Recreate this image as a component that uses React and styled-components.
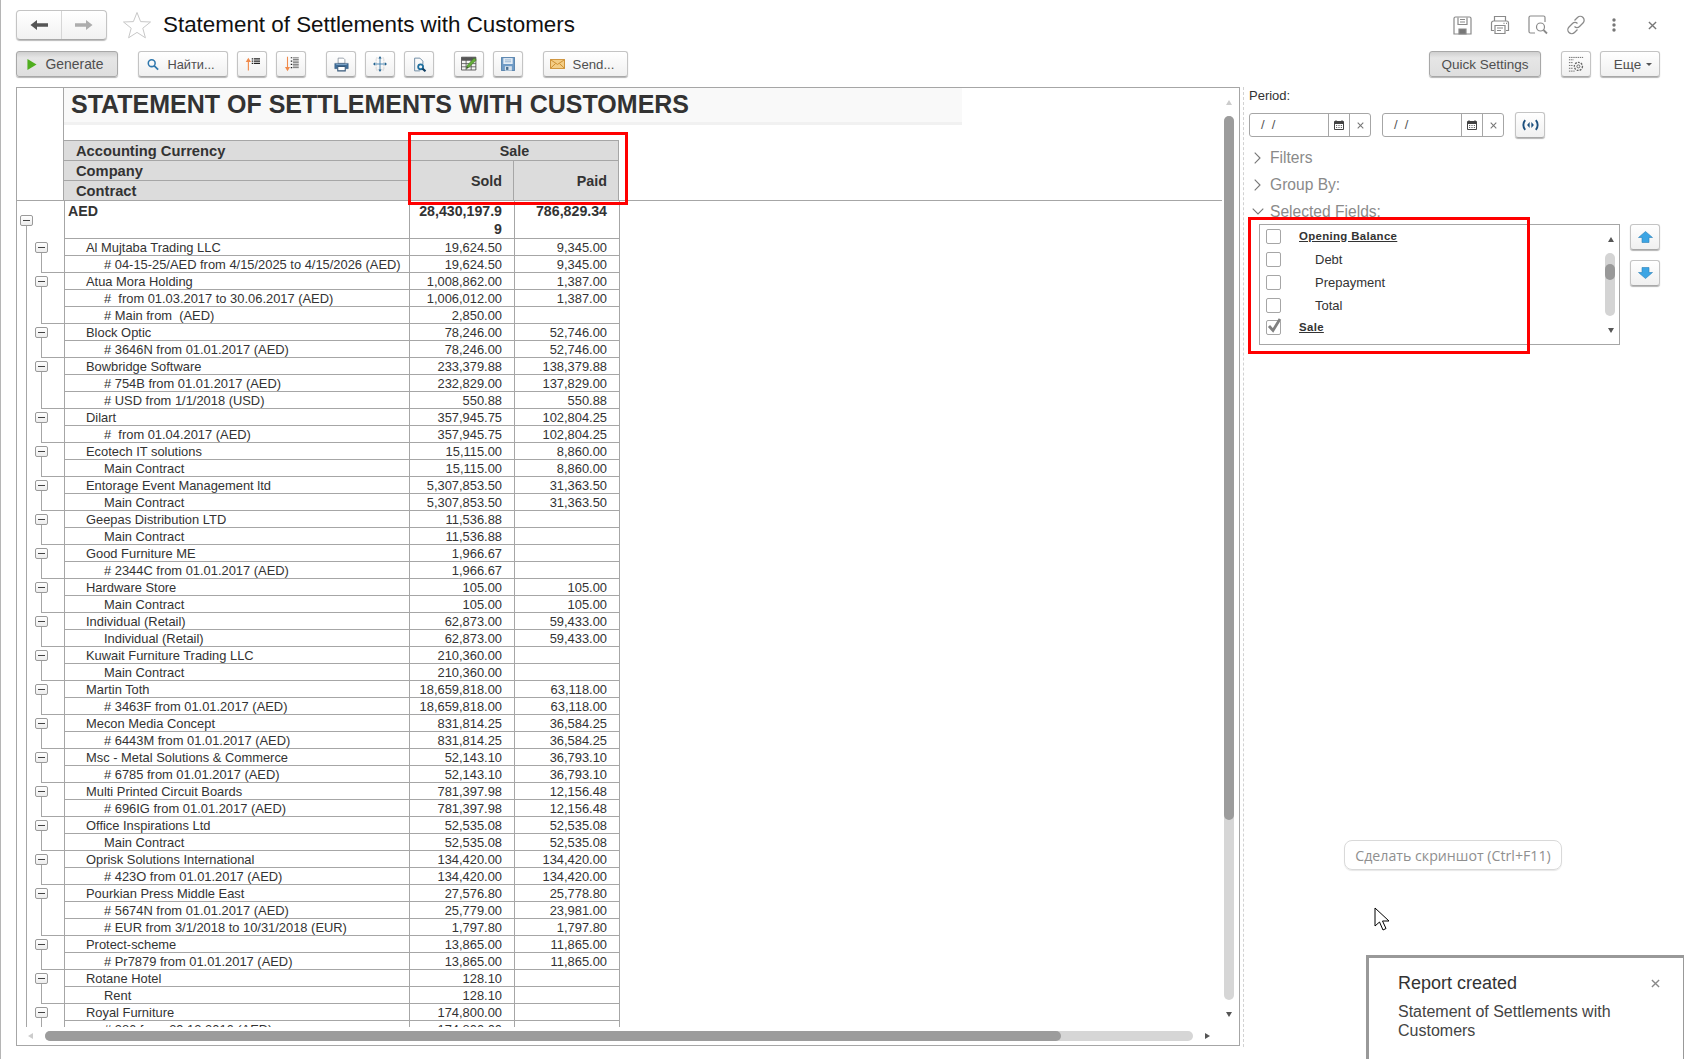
import React from "react";
import styled, { createGlobalStyle } from "styled-components";

const GlobalStyle = createGlobalStyle`
  html, body {
    margin: 0;
    background: #fff;
    font-family: "Liberation Sans", Arial, sans-serif;
    color: #333;
  }
  * {
    box-sizing: border-box;
  }
`;

const Page = styled.div`
  position: relative;
  width: 1684px;
  height: 1059px;
  overflow: hidden;
  border-left: 1px solid #b5b5b5;
  padding: 10px 0 0 15px;
`;

const Header = styled.header`
  display: flex;
  align-items: center;
  height: 30px;
`;
const NavGroup = styled.div`
  display: flex;
  width: 91px;
  height: 30px;
  border: 1px solid #c4c4c4;
  border-bottom-color: #a8a8a8;
  border-radius: 4px;
  background: linear-gradient(#fff, #f1f1f1);
  box-shadow: 0 1px 1px #bbb;
`;
const NavButton = styled.div`
  flex: 1;
  display: flex;
  align-items: center;
  justify-content: center;
  & + & {
    border-left: 1px solid #d6d6d6;
  }
`;
const StarWrap = styled.div`
  display: flex;
  margin-left: 15px;
`;
const Title = styled.h1`
  margin: 0 0 0 11px;
  font-size: 22.4px;
  font-weight: 400;
  color: #111;
  white-space: nowrap;
`;
const WindowIcons = styled.div`
  display: flex;
  align-items: center;
  margin-left: auto;
  margin-right: 20px;
  gap: 14px;
`;
const WindowIcon = styled.div`
  display: flex;
  align-items: center;
  justify-content: center;
  width: 24px;
  height: 24px;
`;

const Toolbar = styled.div`
  display: flex;
  align-items: center;
  height: 26px;
  margin-top: 11px;
`;
const Button = styled.div`
  display: flex;
  align-items: center;
  justify-content: center;
  flex: none;
  height: 26px;
  width: ${(p) => p.$width || 30}px;
  margin-left: ${(p) => p.$gap ?? 9}px;
  padding-right: ${(p) => p.$shift || 0}px;
  border: 1px solid ${(p) => (p.$pressed ? "#a8a8a8" : "#c4c4c4")};
  border-bottom-color: #a8a8a8;
  border-radius: 3px;
  background: ${(p) =>
    p.$pressed
      ? "linear-gradient(#cfcfcf, #e6e6e6 25%, #dedede)"
      : "linear-gradient(#fff, #f0f0f0)"};
  box-shadow: 0 1px 1px #b5b5b5;
  font-size: 13.5px;
  color: #4f4f4f;
  white-space: nowrap;
`;
const ButtonText = styled.span`
  margin-left: ${(p) => p.$gap || 0}px;
  font-size: ${(p) => p.$size || 13.5}px;
`;
const ToolbarRight = styled.div`
  display: flex;
  margin-left: auto;
  margin-right: 24px;
`;
const Caret = styled.span`
  width: 0;
  height: 0;
  margin-left: 5px;
  border-left: 3px solid transparent;
  border-right: 3px solid transparent;
  border-top: 3px solid #555;
`;

const Content = styled.div`
  display: flex;
  margin-top: 10px;
`;
const Report = styled.section`
  position: relative;
  display: flex;
  flex-direction: column;
  flex: none;
  width: 1224px;
  height: 959px;
  border: 1px solid #a6a6a6;
  padding-bottom: 18px;
`;
const ReportBody = styled.div`
  flex: 1;
  overflow: hidden;
`;
const FrozenHead = styled.div`
  display: flex;
  width: 1205px;
  border-bottom: 1px solid #a6a6a6;
`;
const HeadGutter = styled.div`
  flex: none;
  width: 47px;
  border-right: 1px solid #a6a6a6;
`;
const HeadMain = styled.div`
  flex: 1;
`;
const TitleBand = styled.div`
  width: 898px;
  height: 37px;
  margin-bottom: 15px;
  padding-left: 7px;
  background: #f9f9f9;
  border-bottom: 3px solid #f1f1f1;
  font-size: 25px;
  line-height: 32px;
  font-weight: 700;
  color: #333;
  white-space: nowrap;
`;
const HeadGrid = styled.div`
  display: grid;
  grid-template-columns: 344px 105px 106px;
  grid-template-rows: repeat(3, 20px);
  width: 555px;
`;
const HeadCell = styled.div`
  display: flex;
  align-items: center;
  justify-content: ${(p) =>
    p.$align === "end" ? "flex-end" : p.$align === "center" ? "center" : "flex-start"};
  grid-column: ${(p) => p.$col || "auto"};
  grid-row: ${(p) => p.$row || "auto"};
  padding: ${(p) =>
    p.$align === "end" ? "0 11px 0 0" : p.$align === "center" ? "0 0 0 2px" : "0 0 0 12px"};
  background: #dcdcdc;
  border-top: 1px solid #a6a6a6;
  border-left: ${(p) => (p.$side ? "1px solid #a6a6a6" : "0")};
  border-right: ${(p) => (p.$last ? "1px solid #a6a6a6" : "0")};
  font-size: ${(p) => (p.$align ? "14.3px" : "14.7px")};
  font-weight: 700;
  color: #333;
  white-space: nowrap;
`;

const Row = styled.div`
  display: grid;
  grid-template-columns: 47px 345px 105px 106px;
  width: 603px;
  height: ${(p) => (p.$total ? 38 : 17)}px;
`;
const lineColor = "#a6a6a6";
const Gutter = styled.div`
  display: flex;
  align-items: flex-start;
  background-repeat: no-repeat;
  background-image:
    linear-gradient(${lineColor}, ${lineColor}),
    linear-gradient(${lineColor}, ${lineColor}),
    linear-gradient(${lineColor}, ${lineColor});
  background-size:
    1px ${(p) => (p.$total ? "24px" : "100%")},
    1px ${(p) => (p.$kind === "company" ? "11px" : p.$kind === "child" ? "100%" : "0")},
    ${(p) => (p.$closing ? "23px 1px" : "0 0")};
  background-position:
    9px ${(p) => (p.$total ? "14px" : "0")},
    24px ${(p) => (p.$kind === "company" ? "6px" : "0")},
    24px 100%;
`;
const TreeBox = styled.div`
  display: flex;
  align-items: center;
  justify-content: center;
  width: 13px;
  height: 11px;
  margin: ${(p) => (p.$total ? "14px 0 0 3px" : "3px 0 0 18px")};
  border: 1px solid #9a9a9a;
  border-radius: 2px;
  background: linear-gradient(#fff, #ececec);
  &::before {
    content: "";
    width: 7px;
    height: 1px;
    background: #444;
  }
`;
const Cell = styled.div`
  overflow: hidden;
  padding: ${(p) => (p.$total ? "1px 12px 0 3px" : "0 12px 0 0")};
  padding-left: ${(p) => (p.$level ? `${p.$level}px` : undefined)};
  border-left: 1px solid ${lineColor};
  border-bottom: 1px solid ${lineColor};
  border-right: ${(p) => (p.$last ? `1px solid ${lineColor}` : "0")};
  text-align: ${(p) => (p.$num ? "right" : "left")};
  font-size: ${(p) => (p.$total ? "14.2px" : "12.9px")};
  font-weight: ${(p) => (p.$total ? 700 : 400)};
  line-height: 18px;
  color: #333;
  white-space: ${(p) => (p.$total ? "normal" : "pre")};
  word-break: ${(p) => (p.$total ? "break-all" : "normal")};
`;

const ScrollTrack = styled.div`
  position: absolute;
  background: #d6d6d6;
  border-radius: 5px;
  ${(p) =>
    p.$vertical
      ? "left: 1207px; top: 28px; width: 10px; height: 884px;"
      : "left: 28px; top: 943px; width: 1148px; height: 10px;"}
`;
const ScrollThumb = styled.div`
  background: #9c9c9c;
  border-radius: 5px;
  ${(p) => (p.$vertical ? "width: 10px; height: 704px;" : "width: 1016px; height: 10px;")}
`;
const ScrollArrow = styled.div`
  position: absolute;
  left: ${(p) => p.$x}px;
  top: ${(p) => p.$y}px;
  width: 0;
  height: 0;
  ${(p) =>
    p.$dir === "up" || p.$dir === "down"
      ? `border-left: 3px solid transparent; border-right: 3px solid transparent;
         border-${p.$dir === "up" ? "bottom" : "top"}: 5px solid ${p.$light ? "#ccc" : "#555"};`
      : `border-top: 3px solid transparent; border-bottom: 3px solid transparent;
         border-${p.$dir === "left" ? "right" : "left"}: 5px solid ${p.$light ? "#ccc" : "#555"};`}
`;

const Side = styled.aside`
  flex: none;
  width: 441px;
  height: 960px;
  margin-left: 3px;
  padding-left: 5px;
  border-left: 1px dashed #d2d2d2;
`;
const PeriodLabel = styled.div`
  height: 25px;
  padding-top: 1px;
  font-size: 13px;
  line-height: 15px;
  color: #333;
`;
const DateRow = styled.div`
  display: flex;
  align-items: center;
  height: 26px;
`;
const DateField = styled.div`
  display: flex;
  width: 122px;
  height: 24px;
  margin-right: 11px;
  border: 1px solid #a6a6a6;
  border-radius: 3px;
`;
const DateText = styled.div`
  flex: 1;
  padding-left: 11px;
  font-size: 13px;
  line-height: 22px;
  color: #555;
  white-space: pre;
`;
const DatePart = styled.div`
  display: flex;
  align-items: center;
  justify-content: center;
  width: 21px;
  border-left: 1px solid #a6a6a6;
  color: #666;
`;
const Section = styled.div`
  display: flex;
  align-items: center;
  height: 27px;
  margin-top: ${(p) => p.$top || 0}px;
  font-size: 15.6px;
  color: #8a8a8a;
`;
const Chevron = styled.div`
  display: flex;
  justify-content: center;
  width: 15px;
  margin: 0 5px 0 1px;
`;
const FieldsRow = styled.div`
  display: flex;
  margin: -1px 0 0 10px;
`;
const FieldList = styled.div`
  position: relative;
  width: 361px;
  height: 121px;
  overflow: hidden;
  border: 1px solid #a6a6a6;
  padding: 0 0 0 6px;
`;
const FieldRow = styled.div`
  display: flex;
  align-items: center;
  height: ${(p) => (p.$short ? 21 : 23)}px;
`;
const Check = styled.div`
  display: flex;
  align-items: center;
  justify-content: center;
  flex: none;
  width: 15px;
  height: 15px;
  border: 1px solid #a6a6a6;
  border-radius: 2px;
`;
const FieldName = styled.div`
  margin-left: ${(p) => (p.$group ? 18 : 34)}px;
  margin-top: ${(p) => (p.$group ? -2 : 0)}px;
  font-size: ${(p) => (p.$group ? "11.4px" : "13px")};
  font-weight: ${(p) => (p.$group ? 700 : 400)};
  letter-spacing: ${(p) => (p.$group ? "0.35px" : "0")};
  text-decoration: ${(p) => (p.$group ? "underline" : "none")};
  color: #333;
`;
const MoveButtons = styled.div`
  display: flex;
  flex-direction: column;
  gap: 10px;
`;
const ListTrack = styled.div`
  position: absolute;
  left: 345px;
  top: 28px;
  width: 10px;
  height: 63px;
  padding-top: 11px;
  border-radius: 5px;
  background: #d4d4d4;
`;
const ListThumb = styled.div`
  width: 10px;
  height: 16px;
  border-radius: 5px;
  background: #999;
`;

const Hint = styled.div`
  position: absolute;
  left: 1343px;
  top: 840px;
  width: 218px;
  height: 30px;
  border: 1px solid #d9d9d9;
  border-radius: 8px;
  box-shadow: 0 1px 1px #e8e8e8;
  font-family: "Open Sans", sans-serif;
  font-size: 14.2px;
  line-height: 29px;
  text-align: center;
  color: #8f8f8f;
  white-space: nowrap;
`;
const CursorWrap = styled.div`
  position: absolute;
  left: 1373px;
  top: 907px;
  display: flex;
`;
const Toast = styled.div`
  position: absolute;
  left: 1365px;
  top: 955px;
  width: 320px;
  height: 110px;
  border: 3px solid #999;
  background: #fff;
  padding: 14px 30px 0 29px;
`;
const ToastTitle = styled.div`
  font-size: 18px;
  line-height: 22px;
  color: #333;
`;
const ToastText = styled.div`
  margin-top: 8px;
  font-size: 16px;
  line-height: 19px;
  color: #444;
`;
const ToastClose = styled.div`
  position: absolute;
  right: 23px;
  top: 21px;
  display: flex;
`;
const Marker = styled.div`
  position: absolute;
  left: ${(p) => p.$x}px;
  top: ${(p) => p.$y}px;
  width: ${(p) => p.$w}px;
  height: ${(p) => p.$h}px;
  border: 3px solid #f00;
  pointer-events: none;
`;

const Arrow = ({ dir, color }) => (
  <svg width="18" height="10" viewBox="0 0 18 10">
    <path
      d={dir === "left" ? "M0.5 5 7 0V3.3H18V6.7H7V10Z" : "M17.5 5 11 0V3.3H0V6.7H11V10Z"}
      fill={color}
    />
  </svg>
);
const Star = () => (
  <svg width="30" height="28" viewBox="0 0 30 28">
    <path
      d="M15 1.5 18.6 10.6 28.5 11 20.8 17.2 23.4 26.8 15 21.4 6.6 26.8 9.2 17.2 1.5 11 11.4 10.6Z"
      fill="#fff"
      stroke="#c8c8c8"
    />
  </svg>
);
const Play = () => (
  <svg width="10" height="11" viewBox="0 0 11 13" preserveAspectRatio="none">
    <path d="M0.5 0 10.5 6.5 0.5 13Z" fill="#4fae1e" />
  </svg>
);
const Search = () => (
  <svg width="12" height="13" viewBox="0 0 14 14" fill="none">
    <circle cx="5.5" cy="5.5" r="4" stroke="#2f77ad" strokeWidth="1.8" />
    <path d="M8.5 8.5 13 13" stroke="#2f77ad" strokeWidth="2" />
  </svg>
);
const SortUp = () => (
  <svg width="15" height="15" viewBox="0 0 20 20" fill="none">
    <path d="M4.5 18V3" stroke="#f08a4b" strokeWidth="1.5" />
    <path d="M1 6.5 4.5 1 8 6.5Z" fill="#f08a4b" />
    <path d="M9 2.5h2M9 5.5h2M9 8.5h2" stroke="#222" strokeWidth="1.5" />
    <path d="M12 2.5h8M12 5.5h8M12 8.5h8" stroke="#222" strokeWidth="1.5" />
  </svg>
);
const SortDown = () => (
  <svg width="15" height="16" viewBox="0 0 20 22" fill="none">
    <path d="M4.5 1v16" stroke="#f08a4b" strokeWidth="1.5" />
    <path d="M1 15 4.5 21 8 15Z" fill="#f08a4b" />
    <path d="M9 2.5h2M9 7h2M9 11.5h2M9 16h2" stroke="#222" strokeWidth="1.5" />
    <path d="M12 2.5h8M12 4.7h8M12 7h8M12 9.2h8M12 11.5h8M12 13.7h8M12 16h8" stroke="#666" strokeWidth="1.2" />
  </svg>
);
const Printer = () => (
  <svg width="15" height="15" viewBox="0 0 20 20">
    <path d="M5.5 1.5h7l2 2v5h-9Z" fill="#fff" stroke="#7d8a96" />
    <path d="M1 8.5h18v7h-3.5v-3h-11v3H1Z" fill="#3f6f9c" stroke="#36587a" strokeWidth=".6" />
    <path d="M5 12.5h10v6H5Z" fill="#fff" stroke="#36587a" strokeWidth="1.4" />
    <path d="M3 10h14" stroke="#8fb2d2" />
  </svg>
);
const FitPage = () => (
  <svg width="14" height="16" viewBox="0 0 20 20" fill="none" preserveAspectRatio="none">
    <path d="M4.5 2.5h11v15h-11Z" stroke="#b5b5b5" strokeDasharray="1 1" />
    <path d="M10 2v16M1.5 10h17" stroke="#3e7fae" strokeWidth="1.2" />
    <path d="M10 0 7.8 3h4.4ZM10 20 7.8 17h4.4ZM0 10 3 7.8v4.4ZM20 10 17 7.8v4.4Z" fill="#24628f" />
  </svg>
);
const PagePreview = () => (
  <svg width="15" height="15" viewBox="0 0 20 20" fill="none">
    <path d="M3.5 18.5V1.5h7l4 4v4" stroke="#6f8ca5" strokeWidth="1.3" />
    <path d="M3.5 18.5h7" stroke="#6f8ca5" strokeWidth="1.3" />
    <circle cx="11.5" cy="13" r="3.3" stroke="#1f6f9e" strokeWidth="2.4" />
    <path d="M14 15.5 18 19" stroke="#123f63" strokeWidth="2.8" />
  </svg>
);
const EditTable = () => (
  <svg width="17" height="16" viewBox="0 0 20 20" fill="none" preserveAspectRatio="none">
    <path d="M.5 1.5h17v16H.5Z" fill="#f4f4f4" stroke="#444" />
    <path d="M.5 5.5h17M.5 9.5h17M.5 13.5h17M6 1.5v16M12 1.5v16" stroke="#555" />
    <path d="M.5 1.5h17V5H.5Z" fill="#555" />
    <path d="M15.5 2.5 18 5 9.5 14 6.5 15.5 7.5 11.5Z" fill="#65ad3a" stroke="#3d7a24" strokeWidth=".7" />
    <path d="M6.5 15.5 7 13.5 8.5 15Z" fill="#333" />
  </svg>
);
const Floppy = () => (
  <svg width="14" height="14" viewBox="0 0 18 19" preserveAspectRatio="none">
    <path d="M.5.5h17v18H.5Z" fill="#6f9bc6" stroke="#3c6d9b" />
    <path d="M3 1.5h12v8H3Z" fill="#e6eef6" />
    <path d="M5 4h8M5 6.5h8" stroke="#7ea3c6" />
    <path d="M5 12.5h9v6H5Z" fill="#d8e2ec" />
    <path d="M6.5 13.5h3v4h-3Z" fill="#4a6e90" />
  </svg>
);
const Envelope = () => (
  <svg width="15" height="10" viewBox="0 0 15 12" fill="none" preserveAspectRatio="none">
    <path d="M.5.5h14v11H.5Z" fill="#f3cd85" stroke="#c98a2c" />
    <path d="M.5.8 7.5 6.5 14.5.8M.5 11.2 5.5 5.5M14.5 11.2 9.5 5.5" stroke="#c98a2c" />
  </svg>
);
const GearList = () => (
  <svg width="17" height="17" viewBox="0 0 18 18" fill="none" stroke="#666">
    <path d="M1 1.5h15M1 4h5M1 7h4M1 10h4M1 13h4M1 16h6" strokeDasharray="1.5 .8" />
    <circle cx="11" cy="11" r="1.6" />
    <circle cx="11" cy="11" r="4.3" strokeWidth="1.4" strokeDasharray="2 1.2" />
  </svg>
);
const Calendar = () => (
  <svg width="10" height="10" viewBox="0 0 10 10">
    <path d="M.5 1.5h9v8h-9Z" fill="#fff" stroke="#444" />
    <path d="M.5 1.5h9V4h-9Z" fill="#444" />
    <path d="M2 .2v2M8 .2v2" stroke="#444" />
    <path d="M2 5.5h1.2M4.4 5.5h1.2M6.8 5.5H8M2 7.5h1.2M4.4 7.5h1.2M6.8 7.5H8" stroke="#666" />
  </svg>
);
const Cross = ({ size = 8, color = "#777" }) => (
  <svg width={size} height={size} viewBox="0 0 8 8">
    <path d="M.8.8 7.2 7.2M7.2.8.8 7.2" stroke={color} strokeWidth="1.2" />
  </svg>
);
const PeriodPick = () => (
  <svg width="17" height="12" viewBox="0 0 16 10" fill="none">
    <path d="M3 .5C.7 3 .7 7 3 9.5M13 .5c2.3 2.5 2.3 6.5 0 9" stroke="#1b4f7d" strokeWidth="1.8" />
    <path d="M7.2 2.2 4.8 5l2.4 2.8ZM8.8 2.2 11.2 5 8.8 7.8Z" fill="#1b4f7d" />
  </svg>
);
const ChevronIcon = ({ open }) => (
  <svg width={open ? 12 : 7} height={open ? 7 : 12} viewBox={open ? "0 0 12 7" : "0 0 7 12"} fill="none">
    <path d={open ? "M.7.7 6 6 11.3.7" : "M.7.7 6 6 .7 11.3"} stroke="#777" strokeWidth="1.1" />
  </svg>
);
const Tick = () => (
  <svg width="15" height="15" viewBox="0 0 15 15" style={{ margin: "-5px -2px 0 0" }}>
    <path d="M2 8 6 12.5 13 1" fill="none" stroke="#808080" strokeWidth="2.8" />
  </svg>
);
const MoveArrow = ({ dir }) => (
  <svg width="15" height="12" viewBox="0 0 15 12">
    <path
      d={dir === "up" ? "M7.5.5 14.5 6.5H11v5H4v-5H.5Z" : "M7.5 11.5 14.5 5.5H11V.5H4v5H.5Z"}
      fill="#3ca5e4"
      stroke="#2a80b9"
      strokeWidth=".6"
    />
  </svg>
);
const CursorIcon = () => (
  <svg width="17" height="24" viewBox="0 0 17 24">
    <path d="M1 1v18l4.5-4 3.5 8 3-1.5-3.5-7.5H15Z" fill="#fff" stroke="#000" />
  </svg>
);

const SaveOutline = () => (
  <svg width="19" height="19" viewBox="0 0 19 19" fill="none" stroke="#8a8a8a" strokeWidth="1.2">
    <path d="M2.5 1h14A1.5 1.5 0 0 1 18 2.5V18H1V2.5A1.5 1.5 0 0 1 2.5 1Z" />
    <path d="M5 1.5V8.5H14V1.5M7 3.5h5M7 6h5" />
    <path d="M6 13h7v5H6Z" fill="#777" />
  </svg>
);
const PrintOutline = () => (
  <svg width="20" height="20" viewBox="0 0 20 20" fill="none" stroke="#8a8a8a" strokeWidth="1.2">
    <path d="M4.5 6V1.5h11V6" />
    <path d="M4 15.5H1.5V8a2 2 0 0 1 2-2h13a2 2 0 0 1 2 2v7.5H16" />
    <path d="M5 10.5h10v8H5ZM7 13h6M7 15.5h4" />
    <path d="M13.5 8.3h1M16 8.3h1" />
  </svg>
);
const PreviewOutline = () => (
  <svg width="20" height="20" viewBox="0 0 20 20" fill="none" stroke="#8a8a8a" strokeWidth="1.2">
    <path d="M17 7V2.5A1.5 1.5 0 0 0 15.5 1h-13A1.5 1.5 0 0 0 1 2.5v14A1.5 1.5 0 0 0 2.5 18H7" />
    <circle cx="12.5" cy="12" r="4" />
    <path d="M15.5 15 19 18.5" strokeWidth="1.8" />
  </svg>
);
const LinkOutline = () => (
  <svg width="20" height="20" viewBox="0 0 20 20" fill="none" stroke="#8a8a8a" strokeWidth="1.3">
    <path d="M8.5 5.500 11.5 2.500a3.5 3.5 0 0 1 5.500 5.500l-3.500 3.500a3.5 3.5 0 0 1-5 0" />
    <path d="M11.500 14.500l-3 3a3.5 3.5 0 0 1-5.500-5.500l3.500-3.500a3.5 3.5 0 0 1 5 0" />
  </svg>
);
const DotsIcon = () => (
  <svg width="4" height="14" viewBox="0 0 4 14" fill="#777">
    <circle cx="2" cy="2" r="1.7" />
    <circle cx="2" cy="7" r="1.7" />
    <circle cx="2" cy="12" r="1.7" />
  </svg>
);

const customers = [
  ["Al Mujtaba Trading LLC", "19,624.50", "9,345.00", [["# 04-15-25/AED from 4/15/2025 to 4/15/2026 (AED)", "19,624.50", "9,345.00"]]],
  ["Atua Mora Holding", "1,008,862.00", "1,387.00", [
    ["#  from 01.03.2017 to 30.06.2017 (AED)", "1,006,012.00", "1,387.00"],
    ["# Main from  (AED)", "2,850.00", ""],
  ]],
  ["Block Optic", "78,246.00", "52,746.00", [["# 3646N from 01.01.2017 (AED)", "78,246.00", "52,746.00"]]],
  ["Bowbridge Software", "233,379.88", "138,379.88", [
    ["# 754B from 01.01.2017 (AED)", "232,829.00", "137,829.00"],
    ["# USD from 1/1/2018 (USD)", "550.88", "550.88"],
  ]],
  ["Dilart", "357,945.75", "102,804.25", [["#  from 01.04.2017 (AED)", "357,945.75", "102,804.25"]]],
  ["Ecotech IT solutions", "15,115.00", "8,860.00", [["Main Contract", "15,115.00", "8,860.00"]]],
  ["Entorage Event Management ltd", "5,307,853.50", "31,363.50", [["Main Contract", "5,307,853.50", "31,363.50"]]],
  ["Geepas Distribution LTD", "11,536.88", "", [["Main Contract", "11,536.88", ""]]],
  ["Good Furniture ME", "1,966.67", "", [["# 2344C from 01.01.2017 (AED)", "1,966.67", ""]]],
  ["Hardware Store", "105.00", "105.00", [["Main Contract", "105.00", "105.00"]]],
  ["Individual (Retail)", "62,873.00", "59,433.00", [["Individual (Retail)", "62,873.00", "59,433.00"]]],
  ["Kuwait Furniture Trading LLC", "210,360.00", "", [["Main Contract", "210,360.00", ""]]],
  ["Martin Toth", "18,659,818.00", "63,118.00", [["# 3463F from 01.01.2017 (AED)", "18,659,818.00", "63,118.00"]]],
  ["Mecon Media Concept", "831,814.25", "36,584.25", [["# 6443M from 01.01.2017 (AED)", "831,814.25", "36,584.25"]]],
  ["Msc - Metal Solutions & Commerce", "52,143.10", "36,793.10", [["# 6785 from 01.01.2017 (AED)", "52,143.10", "36,793.10"]]],
  ["Multi Printed Circuit Boards", "781,397.98", "12,156.48", [["# 696IG from 01.01.2017 (AED)", "781,397.98", "12,156.48"]]],
  ["Office Inspirations Ltd", "52,535.08", "52,535.08", [["Main Contract", "52,535.08", "52,535.08"]]],
  ["Oprisk Solutions International", "134,420.00", "134,420.00", [["# 423O from 01.01.2017 (AED)", "134,420.00", "134,420.00"]]],
  ["Pourkian Press Middle East", "27,576.80", "25,778.80", [
    ["# 5674N from 01.01.2017 (AED)", "25,779.00", "23,981.00"],
    ["# EUR from 3/1/2018 to 10/31/2018 (EUR)", "1,797.80", "1,797.80"],
  ]],
  ["Protect-scheme", "13,865.00", "11,865.00", [["# Pr7879 from 01.01.2017 (AED)", "13,865.00", "11,865.00"]]],
  ["Rotane Hotel", "128.10", "", [["Rent", "128.10", ""]]],
  ["Royal Furniture", "174,800.00", "", [["# 386 from 29.12.2016 (AED)", "174,800.00", ""]]],
];

const fields = [
  { name: "Opening Balance", group: true },
  { name: "Debt" },
  { name: "Prepayment" },
  { name: "Total" },
  { name: "Sale", group: true, checked: true },
];

export default function App() {
  return (
    <>
      <GlobalStyle />
      <Page>
        <Header>
          <NavGroup>
            <NavButton>
              <Arrow dir="left" color="#555" />
            </NavButton>
            <NavButton>
              <Arrow dir="right" color="#adadad" />
            </NavButton>
          </NavGroup>
          <StarWrap>
            <Star />
          </StarWrap>
          <Title>Statement of Settlements with Customers</Title>
          <WindowIcons>
            <WindowIcon><SaveOutline /></WindowIcon>
            <WindowIcon><PrintOutline /></WindowIcon>
            <WindowIcon><PreviewOutline /></WindowIcon>
            <WindowIcon><LinkOutline /></WindowIcon>
            <WindowIcon><DotsIcon /></WindowIcon>
            <WindowIcon><Cross size={9} /></WindowIcon>
          </WindowIcons>
        </Header>

        <Toolbar>
          <Button $width={102} $gap={0} $pressed $shift={4}>
            <Play />
            <ButtonText $gap={9} $size={13.9}>Generate</ButtonText>
          </Button>
          <Button $width={90} $gap={20} $shift={4}>
            <Search />
            <ButtonText $gap={8} $size={12.8}>Найти...</ButtonText>
          </Button>
          <Button><SortUp /></Button>
          <Button><SortDown /></Button>
          <Button $gap={20}><Printer /></Button>
          <Button><FitPage /></Button>
          <Button><PagePreview /></Button>
          <Button $gap={20}><EditTable /></Button>
          <Button><Floppy /></Button>
          <Button $width={85} $gap={20} $shift={7}>
            <Envelope />
            <ButtonText $gap={8} $size={13.2}>Send...</ButtonText>
          </Button>
          <ToolbarRight>
            <Button $width={112} $gap={0} $pressed>Quick Settings</Button>
            <Button $gap={20}><GearList /></Button>
            <Button $width={60}>
              <ButtonText $gap={6}>Еще</ButtonText>
              <Caret />
            </Button>
          </ToolbarRight>
        </Toolbar>

        <Content>
          <Report>
            <ReportBody>
              <FrozenHead>
                <HeadGutter />
                <HeadMain>
                  <TitleBand>STATEMENT OF SETTLEMENTS WITH CUSTOMERS</TitleBand>
                  <HeadGrid>
                    <HeadCell>Accounting Currency</HeadCell>
                    <HeadCell $col="2 / 4" $align="center" $side $last>Sale</HeadCell>
                    <HeadCell>Company</HeadCell>
                    <HeadCell $col="2" $row="2 / 4" $align="end" $side>Sold</HeadCell>
                    <HeadCell $col="3" $row="2 / 4" $align="end" $side $last>Paid</HeadCell>
                    <HeadCell>Contract</HeadCell>
                  </HeadGrid>
                </HeadMain>
              </FrozenHead>

              <Row $total>
                <Gutter $total>
                  <TreeBox $total />
                </Gutter>
                <Cell $total>AED</Cell>
                <Cell $total $num>28,430,197.99</Cell>
                <Cell $total $num $last>786,829.34</Cell>
              </Row>
              {customers.map(([name, sold, paid, contracts]) => (
                <React.Fragment key={name}>
                  <Row>
                    <Gutter $kind="company">
                      <TreeBox />
                    </Gutter>
                    <Cell $level={21}>{name}</Cell>
                    <Cell $num>{sold}</Cell>
                    <Cell $num $last>{paid}</Cell>
                  </Row>
                  {contracts.map((c, i) => (
                    <Row key={c[0]}>
                      <Gutter $kind="child" $closing={i === contracts.length - 1} />
                      <Cell $level={39}>{c[0]}</Cell>
                      <Cell $num>{c[1]}</Cell>
                      <Cell $num $last>{c[2]}</Cell>
                    </Row>
                  ))}
                </React.Fragment>
              ))}
            </ReportBody>
            <ScrollArrow $dir="up" $x={1209} $y={12} $light />
            <ScrollTrack $vertical>
              <ScrollThumb $vertical />
            </ScrollTrack>
            <ScrollArrow $dir="down" $x={1209} $y={924} />
            <ScrollArrow $dir="left" $x={11} $y={945} $light />
            <ScrollTrack>
              <ScrollThumb />
            </ScrollTrack>
            <ScrollArrow $dir="right" $x={1188} $y={945} />
          </Report>

          <Side>
            <PeriodLabel>Period:</PeriodLabel>
            <DateRow>
              <DateField>
                <DateText>/  /</DateText>
                <DatePart><Calendar /></DatePart>
                <DatePart><Cross size={7} /></DatePart>
              </DateField>
              <DateField>
                <DateText>/  /</DateText>
                <DatePart><Calendar /></DatePart>
                <DatePart><Cross size={7} /></DatePart>
              </DateField>
              <Button $gap={0}><PeriodPick /></Button>
            </DateRow>
            <Section $top={6}>
              <Chevron><ChevronIcon /></Chevron>
              Filters
            </Section>
            <Section>
              <Chevron><ChevronIcon /></Chevron>
              Group By:
            </Section>
            <Section>
              <Chevron><ChevronIcon open /></Chevron>
              Selected Fields:
            </Section>
            <FieldsRow>
              <FieldList>
                {fields.map((f, i) => (
                  <FieldRow key={f.name} $short={i === 4}>
                    <Check>{f.checked && <Tick />}</Check>
                    <FieldName $group={f.group}>{f.name}</FieldName>
                  </FieldRow>
                ))}
                <ScrollArrow $dir="up" $x={348} $y={12} />
                <ListTrack>
                  <ListThumb />
                </ListTrack>
                <ScrollArrow $dir="down" $x={348} $y={103} />
              </FieldList>
              <MoveButtons>
                <Button $gap={10}><MoveArrow dir="up" /></Button>
                <Button $gap={10}><MoveArrow dir="down" /></Button>
              </MoveButtons>
            </FieldsRow>
          </Side>
        </Content>

        <Marker $x={407} $y={132} $w={220} $h={73} />
        <Marker $x={1247} $y={217} $w={282} $h={137} />

        <Hint>Сделать скриншот (Ctrl+F11)</Hint>
        <CursorWrap>
          <CursorIcon />
        </CursorWrap>
        <Toast>
          <ToastTitle>Report created</ToastTitle>
          <ToastText>Statement of Settlements with Customers</ToastText>
          <ToastClose>
            <Cross size={9} color="#888" />
          </ToastClose>
        </Toast>
      </Page>
    </>
  );
}
